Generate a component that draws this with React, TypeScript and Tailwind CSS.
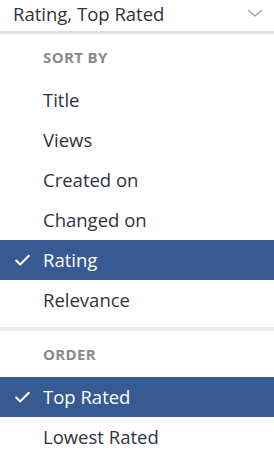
import { Check } from 'lucide-react';

const sortOptions = ['Title', 'Views', 'Created on', 'Changed on', 'Rating', 'Relevance'];
const orderOptions = ['Top Rated', 'Lowest Rated'];

function Option({ label, selected }: { label: string; selected?: boolean }) {
  return (
    <li
      className={`flex h-10 items-center text-[18.5px] ${
        selected ? 'bg-[#365a91] text-white' : 'text-[#2e3440]'
      }`}
    >
      <span className="flex w-[43px] shrink-0 justify-center pl-[1px]">
        {selected && <Check size={19} strokeWidth={2.5} />}
      </span>
      <span>{label}</span>
    </li>
  );
}

function GroupLabel({ children }: { children: string }) {
  return (
    <li className="flex h-[46px] items-center pl-[43px] text-[15px] font-bold uppercase tracking-wide text-[#8a8a8a]">
      {children}
    </li>
  );
}

export default function App() {
  return (
    <div className="w-[274px] bg-white font-['Open_Sans',sans-serif]">
      <button className="flex h-[31px] w-full items-center justify-between pl-[13px] pr-[11px] text-[18.5px] text-[#2e3440]">
        <span className="-mt-[3px]">Rating, Top Rated</span>
        <svg width="16" height="8" viewBox="0 0 16 8" className="-mt-[5px]" fill="none">
          <path d="M1 1l7 6 7-6" stroke="#a0a0a0" strokeWidth="1.3" />
        </svg>
      </button>
      <div className="h-[3px] bg-[#e2e2e2]" />
      <ul>
        <GroupLabel>Sort by</GroupLabel>
        {sortOptions.map((o) => (
          <Option key={o} label={o} selected={o === 'Rating'} />
        ))}
      </ul>
      <div className="mt-[7px] h-[4px] bg-[#ececec]" />
      <ul>
        <GroupLabel>Order</GroupLabel>
        {orderOptions.map((o) => (
          <Option key={o} label={o} selected={o === 'Top Rated'} />
        ))}
      </ul>
    </div>
  );
}
